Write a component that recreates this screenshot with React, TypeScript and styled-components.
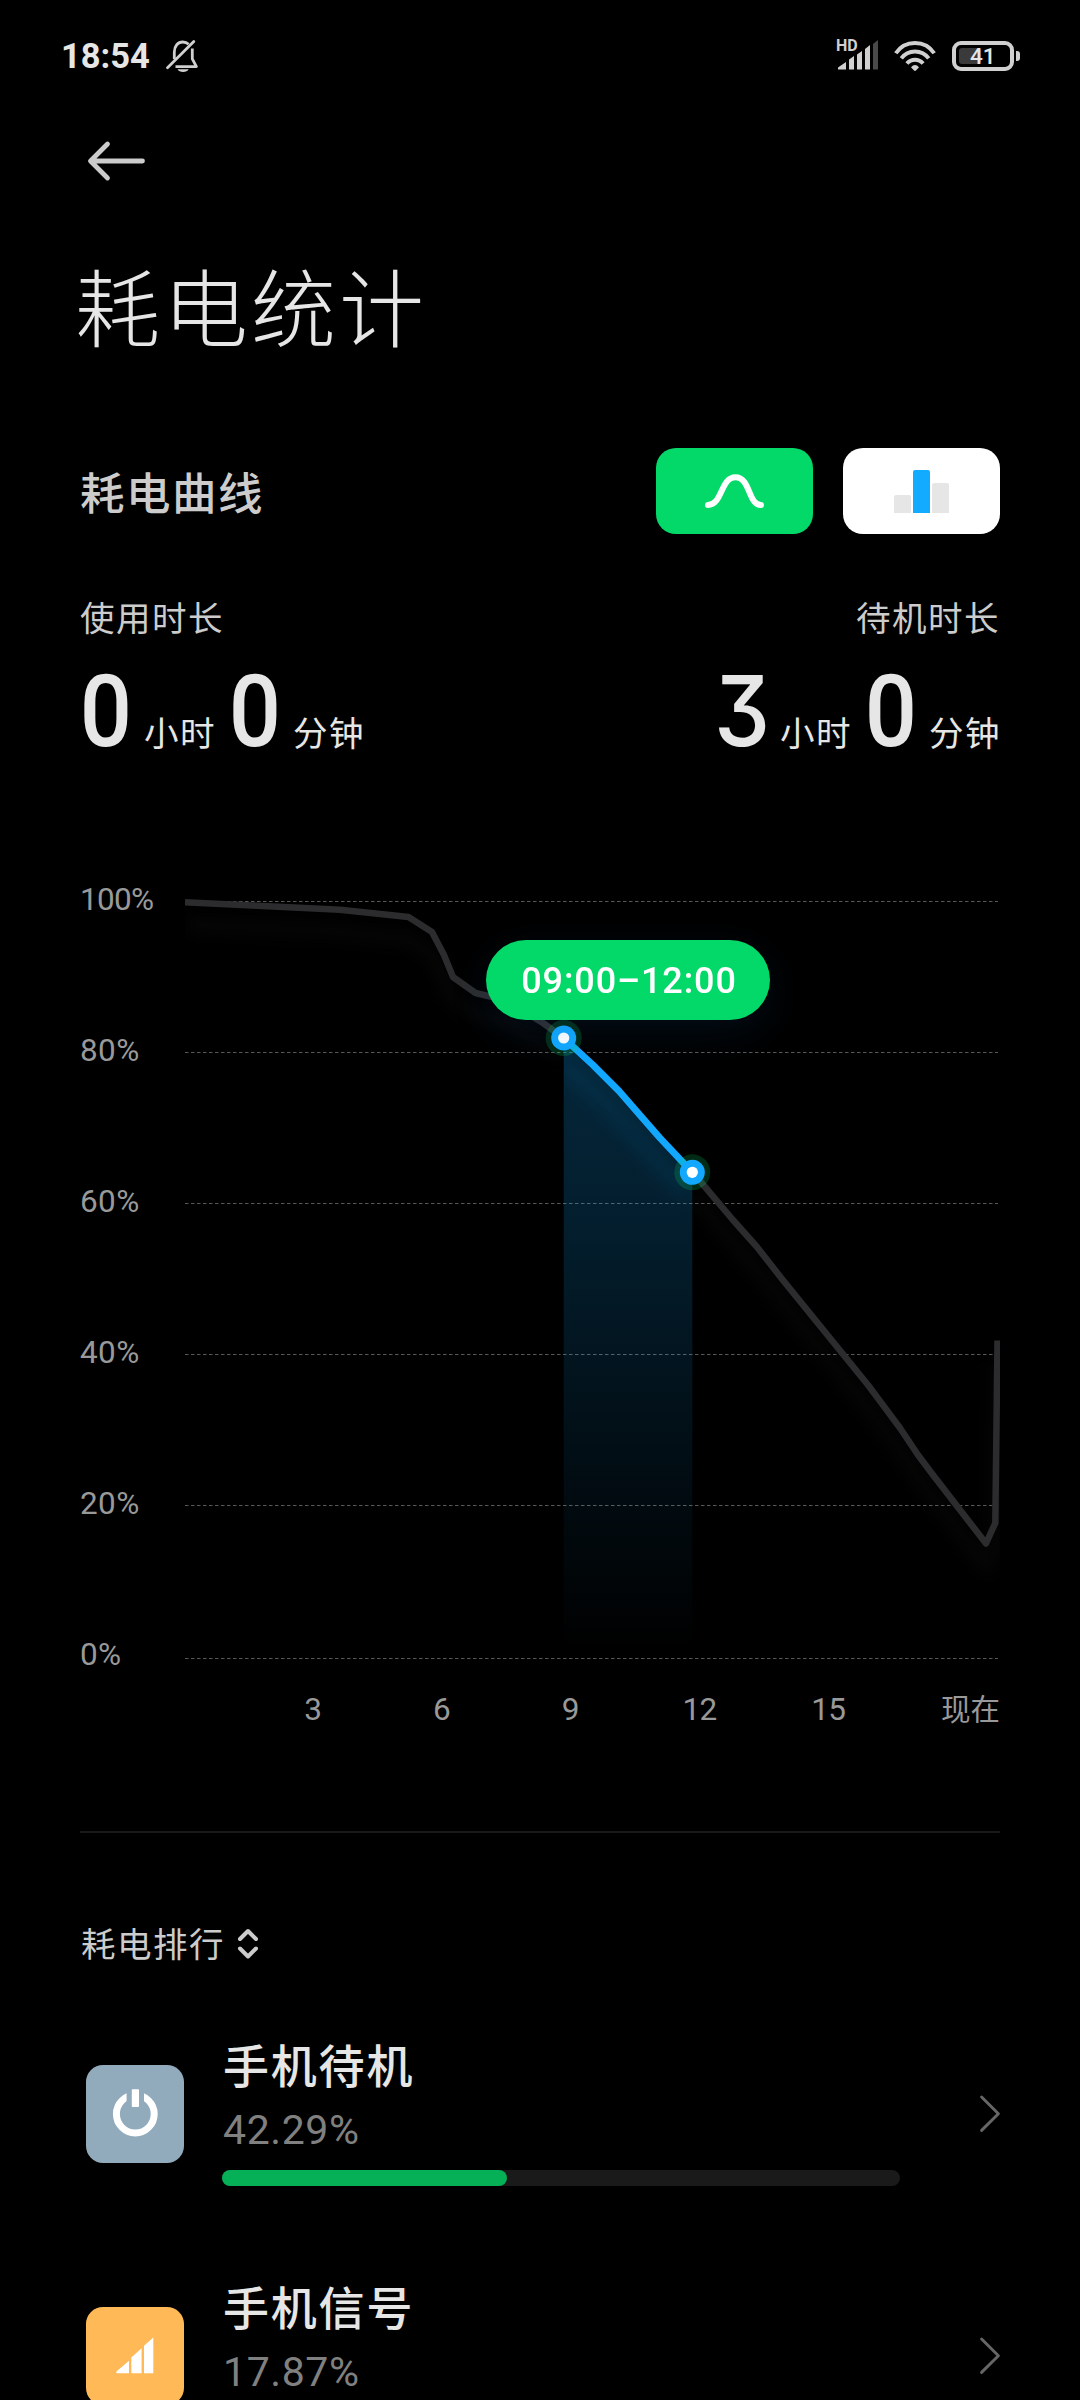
import React from "react";
import styled, { createGlobalStyle } from "styled-components";

const GlobalStyle = createGlobalStyle`
  * { box-sizing: border-box; }
  html, body { margin: 0; background: #000; }
`;

const Page = styled.main`
  display: flex;
  flex-direction: column;
  width: 1080px;
  height: 2400px;
  padding: 0 80px;
  overflow: hidden;
  background: #000;
  color: #e6e6e6;
  font-family: Roboto, "Noto Sans CJK SC", sans-serif;
`;

const Icon = styled.svg`
  display: block;
  flex: none;
  overflow: visible;
`;

const StatusBar = styled.header`
  display: flex;
  flex: none;
  align-items: center;
  justify-content: space-between;
  height: 112px;
  margin: 0 -20px;
`;

const StatusGroup = styled.div`
  display: flex;
  align-items: center;
`;

const Clock = styled.span`
  width: 90px;
  margin: 0 15px 0 1px;
  font-size: 34.5px;
  font-weight: 700;
  letter-spacing: 0;
  line-height: 40px;
  white-space: nowrap;
`;

const Signal = styled.div`
  position: relative;
  width: 43px;
  height: 32px;
  margin-right: 15px;
`;

const HdTag = styled.span`
  position: absolute;
  left: 0;
  top: -2px;
  color: #d0d0d0;
  font-size: 16px;
  font-weight: 700;
  line-height: 16px;
`;

const Battery = styled.div`
  display: flex;
  align-items: center;
  margin-left: 16px;
`;

const BatteryShell = styled.div`
  display: flex;
  align-items: center;
  width: 62px;
  height: 30px;
  padding: 3px;
  border: 4px solid #d0d0d0;
  border-radius: 9px;
`;

const BatteryCharge = styled.div`
  display: flex;
  align-items: center;
  width: 22px;
  height: 16px;
  padding-left: 11px;
  border-radius: 3px;
  background: #3a3a3a;
  color: #e6e6e6;
  font-size: 22.5px;
  font-weight: 500;
  line-height: 16px;
`;

const BatteryTip = styled.div`
  width: 4px;
  height: 10px;
  margin-left: 2px;
  border-radius: 0 3px 3px 0;
  background: #d0d0d0;
`;

const NavBar = styled.nav`
  display: flex;
  flex: none;
  align-items: center;
  height: 97px;
  padding-left: 8px;
`;

const Title = styled.h1`
  flex: none;
  margin: 53px 0 0 -5px;
  font-size: 85px;
  font-weight: 200;
  letter-spacing: 3px;
  line-height: 100px;
`;

const HeadingRow = styled.div`
  display: flex;
  flex: none;
  align-items: center;
  justify-content: space-between;
  height: 86px;
  margin-top: 86px;
`;

const Heading = styled.h2`
  margin: 0;
  padding-top: 7px;
  color: #ccc;
  font-size: 44.5px;
  font-weight: 500;
  letter-spacing: 1.5px;
  line-height: 60px;
`;

const Toggles = styled.div`
  display: flex;
  gap: 30px;
`;

const Toggle = styled.button<{ $active?: boolean }>`
  width: 157px;
  height: 86px;
  padding: 0;
  border: 0;
  border-radius: 20px;
  background: ${(p) => (p.$active ? "#03d968" : "#fff")};
`;

const Durations = styled.section`
  display: flex;
  flex: none;
  justify-content: space-between;
  margin-top: 65px;
`;

const Duration = styled.div<{ $end?: boolean }>`
  display: flex;
  flex-direction: column;
  align-items: ${(p) => (p.$end ? "flex-end" : "flex-start")};
  margin: 0 -1px;
`;

const SmallTitle = styled.div`
  padding: 0 1px;
  color: #ccc;
  font-size: 34.5px;
  letter-spacing: 1.5px;
  line-height: 40px;
`;

const DurationValue = styled.div`
  display: flex;
  align-items: baseline;
  height: 100px;
  margin-top: 23px;
`;

const Digit = styled.span<{ $flat?: boolean }>`
  display: flex;
  justify-content: center;
  width: 56px;
  margin-right: 9px;
  font-family: ${(p) => (p.$flat ? "Inter" : "Roboto")}, sans-serif;
  font-size: ${(p) => (p.$flat ? 97 : 100)}px;
  font-feature-settings: ${(p) => (p.$flat ? '"cv09"' : "normal")};
  font-weight: 500;
  line-height: ${(p) => (p.$flat ? 97 : 100)}px;
  transform: translateX(-1px) scaleX(0.92);
`;

const Unit = styled.span`
  width: 72px;
  font-size: 34.5px;
  letter-spacing: 1.5px;
  line-height: 40px;
  white-space: nowrap;

  & + ${Digit} {
    margin-left: 12px;
  }
`;

const Chart = styled.section`
  display: grid;
  flex: none;
  grid-template-columns: 105px 815px;
  margin-top: 117px;
`;

const YAxis = styled.div`
  display: flex;
  flex-direction: column;
  justify-content: space-between;
  height: 796px;
  padding-top: 1px;
  margin-bottom: -1px;
`;

const AxisLabel = styled.span<{ $tight?: boolean }>`
  color: #999;
  font-size: 31.5px;
  font-weight: 400;
  line-height: 40px;
  letter-spacing: ${(p) => (p.$tight ? "-0.7px" : "0.4px")};
`;

const Plot = styled.div`
  position: relative;
  height: 795px;
`;

const RangeTooltip = styled.div`
  position: absolute;
  left: 301px;
  top: 61px;
  width: 284px;
  height: 80px;
  padding-left: 2px;
  border-radius: 40px;
  background: #03d968;
  box-shadow: 0 12px 40px rgba(18, 90, 160, 0.14);
  color: #fff;
  font-size: 36px;
  font-weight: 500;
  letter-spacing: 0.9px;
  line-height: 82px;
  text-align: center;
`;

const XAxis = styled.div`
  display: grid;
  grid-column: 1 / -1;
  grid-template-columns: repeat(5, 128.75px) 1fr;
  margin-top: 16px;
  padding-left: 169px;
  text-align: center;

  ${AxisLabel}:last-child {
    text-align: right;
    font-size: 29.5px;
    letter-spacing: 0;
  }
`;

const Divider = styled.hr`
  flex: none;
  width: 100%;
  height: 2px;
  margin: 101px 0 0;
  border: 0;
  background: #1a1a1a;
`;

const RankHeader = styled.div`
  display: flex;
  flex: none;
  align-items: center;
  gap: 10px;
  margin: 92px 0 28px;
`;

const Row = styled.article`
  display: flex;
  flex: none;
  align-items: center;
  height: 242px;
  padding-left: 6px;
`;

const Tile = styled.div<{ $color: string }>`
  flex: none;
  width: 98px;
  height: 98px;
  border-radius: 17px;
  background: ${(p) => p.$color};
`;

const RowBody = styled.div`
  display: flex;
  flex-direction: column;
  width: 678px;
  margin: 0 80px 0 38px;
  padding-bottom: 4px;
`;

const Name = styled.div`
  margin: -1px 0 1px;
  padding-left: 1px;
  font-size: 46px;
  font-weight: 500;
  letter-spacing: 1.8px;
  line-height: 60px;
`;

const Percent = styled.div`
  margin-top: 10px;
  padding-left: 1px;
  color: #808080;
  font-size: 41px;
  letter-spacing: 0.6px;
  line-height: 44px;
`;

const Track = styled.div`
  height: 16px;
  margin-top: 18px;
  border-radius: 8px;
  background: #1a1a1a;
`;

const Fill = styled.div`
  height: 100%;
  border-radius: 8px;
  background: #05b056;
`;

const MutedBell = () => (
  <Icon width="32" height="33" viewBox="0 0 32 33" fill="none" stroke="#d0d0d0" strokeWidth="2.8">
    <path d="M8.3 19V12.2C8.3 6 12 2 16.8 2c2.4 0 4.3.8 5.8 2.3M26.3 8.5v10.3L30.4 26.6H9.5" strokeLinejoin="round" />
    <path d="M1.5 27.7 27.8 1.5" strokeLinecap="round" />
    <path d="M11.5 29.2h11.2c-1 1.8-3 2.8-5.6 2.8s-4.600-1-5.600-2.800z" fill="#d0d0d0" stroke="none" />
  </Icon>
);

const SignalBars = () => (
  <Icon width="43" height="32" viewBox="0 0 43 32" fill="#d0d0d0">
    <path d="M2 27.500l8-5.500v7.500H2zM13 19.500l5-3.500v13.500h-5zM21 14.500l5-3.500v18.500h-5zM29 9l5-4v24.500h-5z" />
    <path d="M37 4l5-4v29.500h-5z" fill="#4a4a4a" />
  </Icon>
);

const Wifi = () => (
  <Icon width="42" height="30" viewBox="0 0 42 30" fill="none" stroke="#d0d0d0" strokeWidth="3.9">
    <path d="M1.800 12.300A23 23 0 0 1 40.200 12.300M7.300 17.400A17 17 0 0 1 34.700 17.400M12.900 22.600A10.500 10.500 0 0 1 29.100 22.600" />
    <path d="M17 26.200Q21 22 25 26.200L22 29.500Q21 30.300 20 29.500z" fill="#d0d0d0" stroke="none" />
  </Icon>
);

const BackArrow = () => (
  <Icon width="57" height="40" viewBox="0 0 57 40" fill="none" stroke="#ccc" strokeWidth="4.800" strokeLinecap="round" strokeLinejoin="round">
    <path d="M54.500 20H3M19.500 3 2.500 20l17 17" />
  </Icon>
);

const CurveGlyph = () => (
  <Icon width="157" height="86" viewBox="0 0 157 86" fill="none" stroke="#fff" strokeWidth="6" strokeLinecap="round">
    <path d="M52 57C66.500 57 64.500 29.200 79.500 29.200S92 57 105 57" />
  </Icon>
);

const BarsGlyph = () => (
  <Icon width="157" height="86" viewBox="0 0 157 86">
    <path d="M51 65V49q0-2 2-2h13q2 0 2 2v16zM89 65V37q0-2 2-2h13q2 0 2 2v28z" fill="#e6e6e6" />
    <path d="M70 65V24q0-2 2-2h13q2 0 2 2v41z" fill="#12abff" />
  </Icon>
);

const SortGlyph = () => (
  <Icon width="24" height="32" viewBox="0 0 24 32" fill="none" stroke="#ccc" strokeWidth="4" strokeLinecap="round" strokeLinejoin="round">
    <path d="M4 10 12 2l8 8M4 19.500l8 8 8-8" />
  </Icon>
);

const Chevron = () => (
  <Icon width="20" height="38" viewBox="0 0 20 38" fill="none" stroke="#666" strokeWidth="2.900" strokeLinecap="round" strokeLinejoin="round">
    <path d="M1.600 2 18.400 18.700 1.600 35.400" />
  </Icon>
);

const PowerGlyph = () => (
  <Icon width="98" height="98" viewBox="0 0 98 98">
    <circle cx="49.300" cy="49" r="18.900" fill="none" stroke="#fff" strokeWidth="7" />
    <path d="M40.600 24h17.400v18H40.600z" fill="#91abbd" />
    <rect x="45.800" y="24.300" width="7.200" height="17.700" rx="0.800" fill="#fff" />
  </Icon>
);

const CellGlyph = () => (
  <Icon width="98" height="98" viewBox="0 0 98 98" fill="#fff">
    <path d="M30.500 66.300q-.7-1.200.2-2L43 53.700v12.600zM45.300 50.500l10.300-9.200v25H45.300zM58 38.800l9.300-8.200v35.700H58z" />
  </Icon>
);

const gridLines = [901.5, 1052.5, 1203.5, 1354.5, 1505.5, 1658.5];
const curveBefore = "M185 902.300 340 909.700 408.500 917 432 932 444 955 453 977 475.500 993 505 1000 543 1023 563.700 1038";
const curveRange = "M563.700 1038 593 1065 619 1091 639 1114 660 1138 692.300 1172.300";
const curveAfter = "M692.300 1172.300 701.700 1183 733 1220 757 1247 782 1279 868 1385 900 1428 918 1455 933 1475 986 1543.500 995.300 1523 997.500 1340.500";
const points = [
  [563.7, 1038],
  [692.3, 1172.3],
];

const BatteryPlot = () => (
  <Icon width="815" height="795" viewBox="185 879 815 795" fill="none">
    <defs>
      <linearGradient id="range" x1="0" y1="1038" x2="0" y2="1650" gradientUnits="userSpaceOnUse">
        <stop offset="0" stopColor="#12a8ff" stopOpacity="0.230" />
        <stop offset="0.300" stopColor="#12a8ff" stopOpacity="0.180" />
        <stop offset="1" stopColor="#12a8ff" stopOpacity="0" />
      </linearGradient>
      <filter id="soft" x="-10%" y="-10%" width="120%" height="130%">
        <feGaussianBlur stdDeviation="8" />
      </filter>
      <clipPath id="area">
        <path d="M185 879h815v795H185z" />
      </clipPath>
      <clipPath id="span">
        <path d={curveRange + "V1658H563.700z"} />
      </clipPath>
    </defs>
    <g clipPath="url(#area)">
      <g filter="url(#soft)" stroke="#fff" strokeOpacity="0.022" strokeWidth="14">
        <path d={curveBefore} transform="translate(0 22)" />
        <path d={curveAfter} transform="translate(0 22)" />
      </g>
      {gridLines.map((y) => (
        <path key={y} d={`M185 ${y}H998`} stroke="#585858" strokeDasharray="3.500 2.500" />
      ))}
      <path d={curveRange + "V1658H563.700z"} fill="url(#range)" />
      <g clipPath="url(#span)">
        <path d={curveRange} transform="translate(-4 22)" stroke="#12a8ff" strokeOpacity="0.070" strokeWidth="18" filter="url(#soft)" />
      </g>
      <g stroke="#2c2c2e" strokeWidth="6.500" strokeLinejoin="round">
        <path d={curveBefore} />
        <path d={curveAfter} />
      </g>
      <path d={curveRange} stroke="#12a8ff" strokeWidth="6.800" strokeLinejoin="round" />
    </g>
    {points.map(([x, y]) => (
      <g key={x}>
        <circle cx={x} cy={y} r="18" fill="#03d968" fillOpacity="0.200" />
        <circle cx={x} cy={y} r="12.500" fill="#12a8ff" />
        <circle cx={x} cy={y} r="5.600" fill="#fff" />
      </g>
    ))}
  </Icon>
);

type Consumer = { name: string; percent: string; share: number; color: string; glyph: React.ReactNode };

const consumers: Consumer[] = [
  { name: "手机待机", percent: "42.29%", share: 42.1, color: "#91abbd", glyph: <PowerGlyph /> },
  { name: "手机信号", percent: "17.87%", share: 17.87, color: "#ffb956", glyph: <CellGlyph /> },
];

export default function App() {
  return (
    <Page>
      <GlobalStyle />
      <StatusBar>
        <StatusGroup>
          <Clock>18:54</Clock>
          <MutedBell />
        </StatusGroup>
        <StatusGroup>
          <Signal>
            <HdTag>HD</HdTag>
            <SignalBars />
          </Signal>
          <Wifi />
          <Battery>
            <BatteryShell>
              <BatteryCharge>41</BatteryCharge>
            </BatteryShell>
            <BatteryTip />
          </Battery>
        </StatusGroup>
      </StatusBar>

      <NavBar>
        <BackArrow />
      </NavBar>
      <Title>耗电统计</Title>

      <HeadingRow>
        <Heading>耗电曲线</Heading>
        <Toggles>
          <Toggle $active>
            <CurveGlyph />
          </Toggle>
          <Toggle>
            <BarsGlyph />
          </Toggle>
        </Toggles>
      </HeadingRow>

      <Durations>
        <Duration>
          <SmallTitle>使用时长</SmallTitle>
          <DurationValue>
            <Digit>0</Digit>
            <Unit>小时</Unit>
            <Digit>0</Digit>
            <Unit>分钟</Unit>
          </DurationValue>
        </Duration>
        <Duration $end>
          <SmallTitle>待机时长</SmallTitle>
          <DurationValue>
            <Digit $flat>3</Digit>
            <Unit>小时</Unit>
            <Digit>0</Digit>
            <Unit>分钟</Unit>
          </DurationValue>
        </Duration>
      </Durations>

      <Chart>
        <YAxis>
          {["100%", "80%", "60%", "40%", "20%", "0%"].map((label) => (
            <AxisLabel key={label} $tight={label.startsWith("1")}>
              {label}
            </AxisLabel>
          ))}
        </YAxis>
        <Plot>
          <BatteryPlot />
          <RangeTooltip>09:00–12:00</RangeTooltip>
        </Plot>
        <XAxis>
          {["3", "6", "9", "12", "15", "现在"].map((label) => (
            <AxisLabel key={label} $tight={label.startsWith("1")}>
              {label}
            </AxisLabel>
          ))}
        </XAxis>
      </Chart>

      <Divider />

      <RankHeader>
        <SmallTitle>耗电排行</SmallTitle>
        <SortGlyph />
      </RankHeader>
      {consumers.map((item) => (
        <Row key={item.name}>
          <Tile $color={item.color}>{item.glyph}</Tile>
          <RowBody>
            <Name>{item.name}</Name>
            <Percent>{item.percent}</Percent>
            <Track>
              <Fill style={{ width: `${item.share}%` }} />
            </Track>
          </RowBody>
          <Chevron />
        </Row>
      ))}
    </Page>
  );
}
